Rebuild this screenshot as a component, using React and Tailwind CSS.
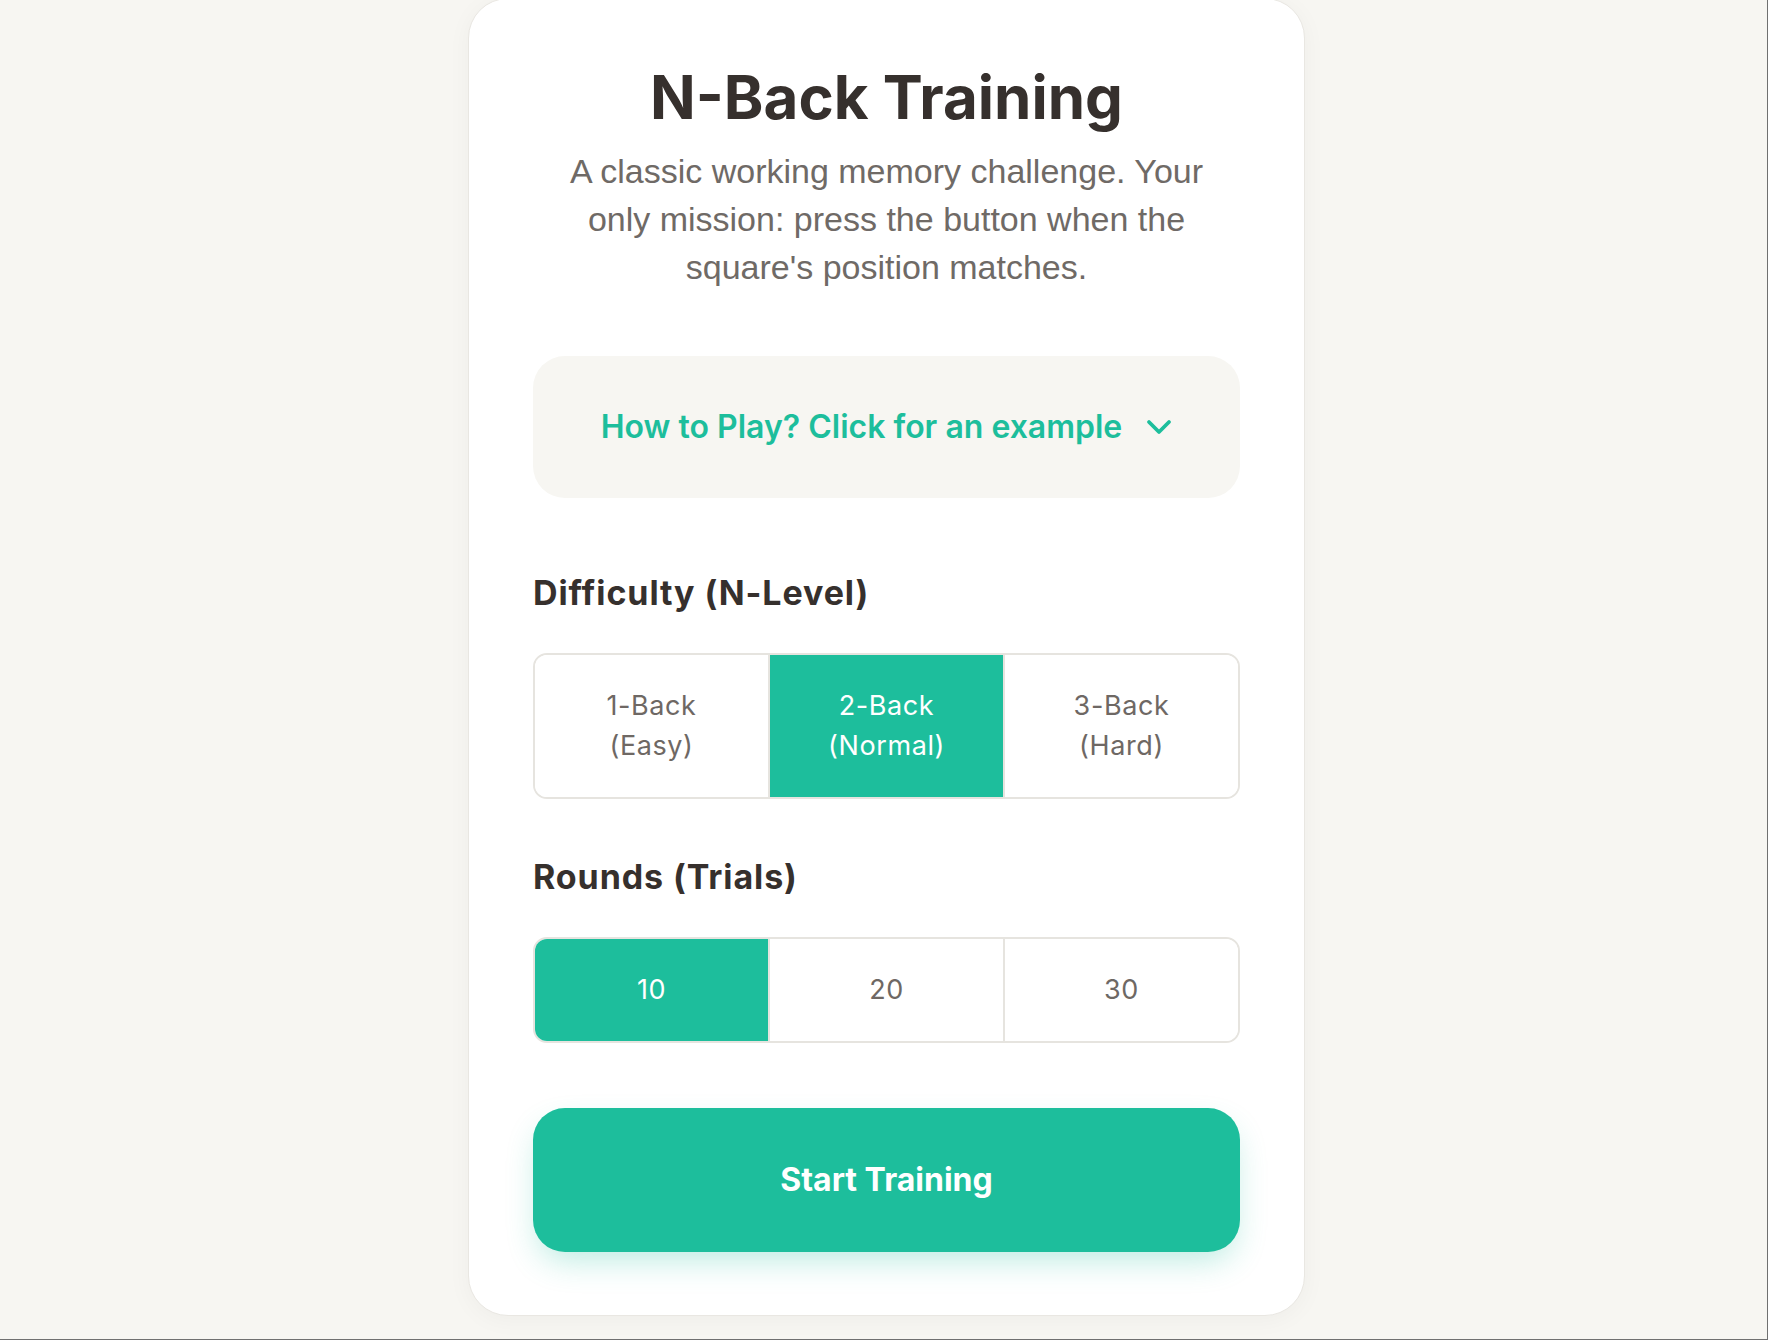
import React, { useState } from 'react';

const difficulties = [
    { n: 1, label: '1-Back', sub: '(Easy)' },
    { n: 2, label: '2-Back', sub: '(Normal)' },
    { n: 3, label: '3-Back', sub: '(Hard)' },
];

const roundOptions = [10, 20, 30];

function Segment({ active, first, onClick, children }) {
    return (
        <button
            onClick={onClick}
            className={`flex-1 py-[31px] text-[27px] leading-[40px] tracking-[0.6px] ${first ? '' : 'border-l-2 border-[#e6e4df]'} ${active ? 'bg-[#1dbe9c] text-white' : 'bg-white text-[#6e6864]'}`}
        >
            {children}
        </button>
    );
}

export default function App() {
    const [level, setLevel] = useState(2);
    const [rounds, setRounds] = useState(10);
    const [open, setOpen] = useState(false);

    return (
        <div className="w-full h-[1340px] overflow-hidden bg-[#f7f6f2] border-r border-b border-[#707070] flex justify-center pl-[6px] font-[family-name:Inter,sans-serif]">
            <div className="w-[837px] h-[1318px] mt-[-2px] bg-white rounded-[40px] border border-[#e9e7e2] shadow-[0_4px_24px_rgba(0,0,0,0.04)] px-[64px] pt-[62px]">
                <h1 className="text-center text-[60px] leading-[72px] font-bold text-[#36302d]">
                    N-Back Training
                </h1>
                <p className="mt-[14px] px-[10px] text-center text-[34px] leading-[48px] text-[#6f6a66] font-[family-name:Liberation_Sans,Arial,sans-serif]">
                    A classic working memory challenge. Your only mission: press the button when the square's position matches.
                </p>

                <button
                    onClick={() => setOpen(!open)}
                    className="mt-[65px] w-full h-[142px] rounded-[32px] bg-[#f7f6f2] flex items-center justify-center gap-[24px] text-[#1dbe9c]"
                >
                    <span className="text-[32px] font-semibold">How to Play? Click for an example</span>
                    <svg width="26" height="16" viewBox="0 0 26 16" fill="none">
                        <polyline points="3,3 13,13 23,3" stroke="#1dbe9c" strokeWidth="3.8" strokeLinecap="round" strokeLinejoin="round" />
                    </svg>
                </button>

                <h2 className="mt-[71px] text-[34px] leading-[48px] font-bold tracking-[0.9px] text-[#36302d]">
                    Difficulty (N-Level)
                </h2>
                <div className="mt-[36px] flex rounded-[14px] border-2 border-[#e6e4df] overflow-hidden">
                    {difficulties.map((d, i) => (
                        <Segment key={d.n} first={i === 0} active={level === d.n} onClick={() => setLevel(d.n)}>
                            <span className="block">{d.label}</span>
                            <span className="block">{d.sub}</span>
                        </Segment>
                    ))}
                </div>

                <h2 className="mt-[54px] text-[34px] leading-[48px] font-bold tracking-[0.9px] text-[#36302d]">
                    Rounds (Trials)
                </h2>
                <div className="mt-[36px] flex rounded-[14px] border-2 border-[#e6e4df] overflow-hidden">
                    {roundOptions.map((r, i) => (
                        <Segment key={r} first={i === 0} active={rounds === r} onClick={() => setRounds(r)}>
                            {r}
                        </Segment>
                    ))}
                </div>

                <button className="mt-[65px] w-full h-[144px] rounded-[32px] bg-[#1dbe9c] text-white text-[32px] font-bold shadow-[0_14px_32px_-6px_rgba(29,190,156,0.3)]">
                    Start Training
                </button>
            </div>
        </div>
    );
}
